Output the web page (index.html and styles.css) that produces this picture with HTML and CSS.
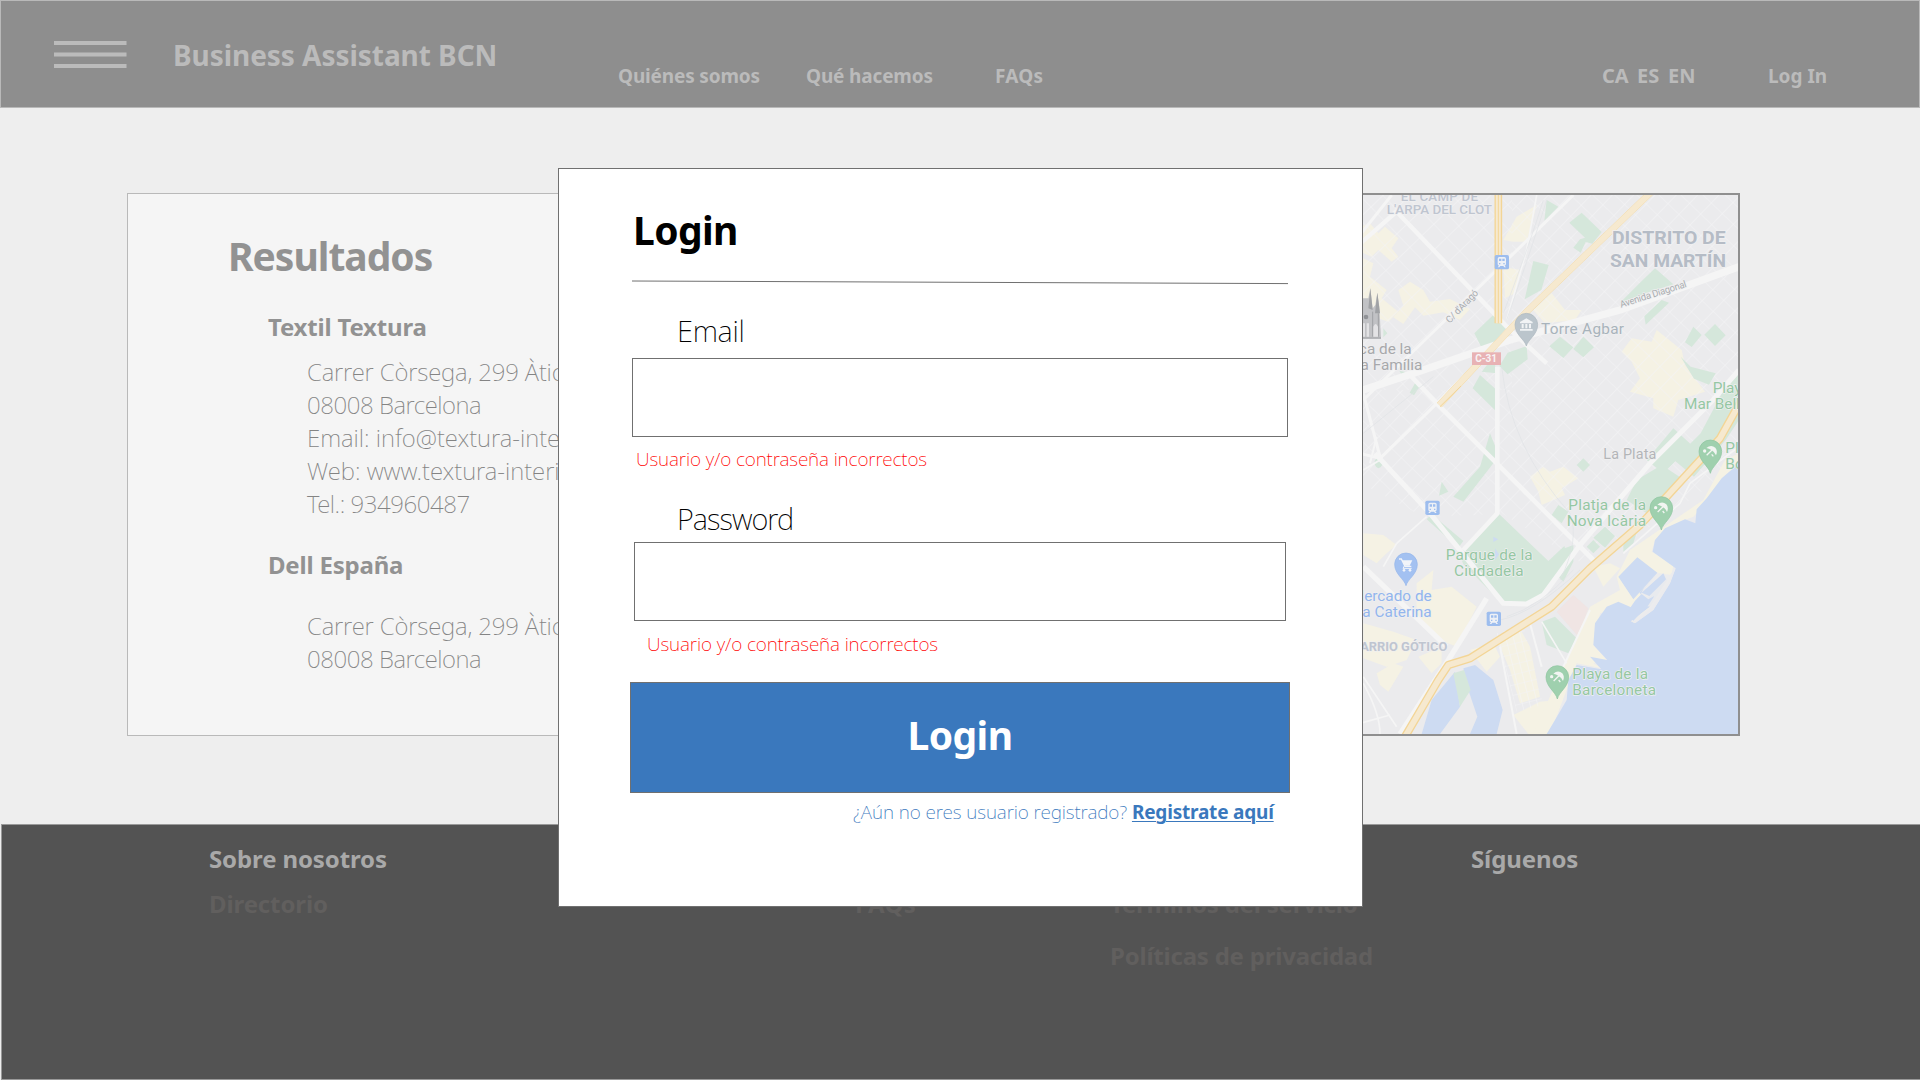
FILE: index.html
```html
<!DOCTYPE html>
<html lang="es">
<head>
<meta charset="utf-8">
<title>Business Assistant BCN</title>
<link rel="stylesheet" href="styles.css">
</head>
<body>
<div class="page">
  <header class="header">
    <svg class="burger" viewBox="0 0 73 27"><path d="M0 2h72.5M0 13.4h72.5M0 25h72.5"/></svg>
    <div class="brand">Business Assistant BCN</div>
    <a class="nav">Quiénes somos</a>
    <a class="nav">Qué hacemos</a>
    <a class="nav nav-faqs">FAQs</a>
    <a class="nav lang">CA</a>
    <a class="nav lang">ES</a>
    <a class="nav lang">EN</a>
    <a class="nav login-link">Log In</a>
  </header>

  <main class="main">
    <section class="results">
      <h1 class="results-title">Resultados</h1>
      <h2 class="company">Textil Textura</h2>
      <div class="address">
        <p class="sp-a">Carrer Còrsega, 299 Àtic</p>
        <p class="sp-b">08008 Barcelona</p>
        <p>Email: info@textura-interiors</p>
        <p>Web: www.textura-interiors</p>
        <p class="sp-b">Tel.: 934960487</p>
      </div>
      <h2 class="company second">Dell España</h2>
      <div class="address second">
        <p class="sp-a">Carrer Còrsega, 299 Àtic</p>
        <p class="sp-b">08008 Barcelona</p>
      </div>
    </section>

    <section class="map">
      <svg class="map-svg" viewBox="-54 45 1188 1617" preserveAspectRatio="none">
        <defs>
          <pattern id="blocks" width="46" height="46" patternUnits="userSpaceOnUse" patternTransform="translate(12 20) rotate(44)">
            <path d="M0 0H46M0 0V46" class="street"/>
          </pattern>
          <pattern id="blocksWide" width="56" height="50" patternUnits="userSpaceOnUse" patternTransform="translate(30 4) rotate(46)">
            <path d="M0 0H56M0 0V50" class="street"/>
          </pattern>
          <pattern id="lots" width="22" height="30" patternUnits="userSpaceOnUse" patternTransform="translate(420 1400) rotate(-14)">
            <path d="M0 0H22M0 0V30" class="street"/>
          </pattern>
          <g id="train">
            <rect width="43" height="43" rx="5" fill="#9dbdee"/>
            <path d="M14 6h15q5 0 5 5v16q0 4-4 5l4 5h-5l-3-4h-9l-3 4H9l4-5q-4-1-4-5V11q0-5 5-5z" fill="#eef1f6"/>
            <path d="M13 11h7v7h-7zM23 11h7v7h-7zM13 24h4v4h-4zM26 24h4v4h-4z" fill="#9dbdee"/>
          </g>
          <g id="beach">
            <path d="M0 66C-5 44-34 30-34 0A34 34 0 0 1 34 0C34 30 5 44 0 66z" fill="#9fd0ae" stroke="#8dc49e" stroke-width="2"/>
            <path d="M-12-10Q2-22 15-11Q23-1 17 12Q13 2 4-3Q-4-9-12-10z" fill="#f2f5f2"/>
            <path d="M5-4L-11 12M4 9l5 6" stroke="#f2f5f2" stroke-width="4" fill="none"/>
            <circle cx="-17" cy="-1" r="5" fill="#f2f5f2"/>
          </g>
        </defs>

        <rect x="-54" y="45" width="1188" height="1617" fill="#ebebed"/>

        <g class="built">
          <path d="M0 140l30-10 25 30 20-20 40 35-20 30 20 25-20 15-40-35-20 20-35-15z"/>
          <path d="M-10 225l50 25-10 40 50 40-15 25 50 40-30 30-60-20-40-10z"/>
          <path d="M115 330l35-25 40 25 20 35 60-8 60 30-30 32-50-22-60 10-25-25-35 50-30-20 30-35z"/>
          <path d="M430 180l40-70 60-35-30 110-40 0z"/>
          <path d="M430 260l50 10-15 70-30 15zM520 390l55-50 40 50 50 0-20 30-90 10z"/>
          <path d="M785 515l30-40 60 10 15-35 75 60 10 45 60 80-80 25-15 50-60-25 0-30-70-20 30-40-25-50z"/>
          <path d="M510 890l40-30 20 15 40-15 45 35-50 30 10 20-70 30-10-40z"/>
          <path d="M10 1060l60 5 40 30-30 25-30 30-40-25zM170 1210l50-40-5 60 60-10 75 60-60 120-50-20-70-60z"/>
          <path d="M10 1330l90 25 70 25-30 60-60 20-70-25zM50 1480l50-30 30 10-45 75-25-20zM175 1430l70-30 0 50-30 30z"/>
          <path d="M330 1410l70-20 20 40-40 45zM410 1385l75-30 25 45 30 150-60 20-30-100-30-70zM460 1605l80-40 55-5-30 102-60 0z"/>
          <path d="M700 1160l50-10 30 15-50 55z"/>
        </g>

        <rect x="-54" y="45" width="510" height="585" fill="url(#blocksWide)"/>
        <path d="M456 45H1134V860L690 1165 430 1003 190 1010-54 880V630H456z" fill="url(#blocks)"/>
        <path d="M410 1360l80-25 60 240-80 20z" fill="url(#lots)"/>

        <g class="park">
          <path d="M628 128l37-30 60 58-28 35-20-5-15 32-22-15 20-25 15-5z"/>
          <path d="M520 243l46 12-22 75-50 28zM560 60l35 20-42 42zM405 400l38 40-70 80-30-60z"/>
          <path d="M885 265l55 48-80 25-80 30 60-60zM905 360l22 8-70 66-4-25z"/>
          <path d="M1000 440l25 25-30 36-20-14zM1065 432l32 34-32 32-32-34zM600 470l40 32-30 32-42-35zM670 470l32 32-32 30-30-25zM962 530l30 30 75 20-20 34-45-18z"/>
          <path d="M500 498l3 40-60 45-25-25 25-40zM400 530l10 50-45-5zM360 585l50 45 0 65-72-70zM165 610l15 8-18 28-13-8zM118 572l18 4-10 10z"/>
          <path d="M390 760l20 50-10 40-90 115-30-15 80-90zM245 905l20 30-28 12z"/>
          <path d="M940 745l55 50-85 85-50-40zM1137 570v150l-40 60-95 110-60-50 80-80 90-170zM830 900l75-45 60 40-105 105-60-40z"/>
          <path d="M215 1003l95 80-15 20-95-85zM595 975l30 20-20 35-30-25zM735 1040l30 28-30 35-35-30zM700 1080l20 20-20 20-20-20zM640 1095l0 50-30 60-15-15 5-80zM790 1080l45-40-15 50-30 25z"/>
          <path d="M418 1003l147 140 48-45 14 42-82 105-45 26-70 2-120-120-12-30 35-30z"/>
          <path d="M545 1325l40-15 65 65-25 45-65-25z"/>
          <path d="M45 840q15-15 25 0 0 20-15 25-15-8-10-25zM670 835l20 20-20 20-20-20zM70 445l12 15-12 12z"/>
        </g>
        <path d="M590 1295l50-50 45 40-30 85z" fill="#f0e5e4"/>
        <path d="M400 1070l15 8-15 8zM405 1105l12 18-12 18z" fill="#cddbf2"/>

        <path class="sand" d="M1137 820L1137 870 1000 1010 960 1025 885 1080 875 1115 900 1130 940 1158 930 1200 870 1285 820 1330 770 1290 720 1300 705 1400 740 1440 700 1450 725 1465 650 1450 570 1662 520 1662 690 1280 780 1230 770 1190 810 1110 1030 960 1095 840z"/>
        <path class="water" d="M1137 850L1085 895 1040 955 1010 988 1006 1030 975 1018 915 1045 885 1080 878 1115 947 1165 930 1210 880 1290 825 1330 813 1324 870 1280 922 1200 905 1185 870 1222 878 1235 860 1258 838 1238 892 1178 832 1258 820 1285 775 1265 740 1280 705 1330 700 1395 742 1440 690 1430 724 1468 650 1455 625 1500 620 1560 585 1620 560 1662 1137 1662z"/>
        <path d="M820 1288l55-112 55 8 17-19-17 45-50 80-55 40-12-6 57-44-40-8z" fill="#ebebed" opacity=".9"/>
        <path class="water" d="M775 1190l57-58 60 46-72 80zM845 1238l65-58 8 18-50 50z"/>
        <path class="water" d="M825 1262l20-20 20 16 18-10-18 28-45 46-22-20z"/>
        <path class="water" d="M185 1662L215 1560 285 1475 300 1580 240 1662zM310 1465L345 1455 400 1500 428 1590 410 1662 330 1662 352 1610 325 1530z"/>
        <path class="park" d="M280 1480l32-10 20 60-32 50z"/>

        <g class="road">
          <path d="M-10 200L110 95 440 440 560 550" stroke-width="13"/>
          <path d="M95 45L-20 190M10 660L410 270 640 45M60 830L10 640M0 820L60 835 200 700 430 470" stroke-width="9"/>
          <path d="M-20 640L190 570 450 480 780 390 1137 260" stroke-width="22"/>
          <path d="M150 585L240 680 420 860 700 1140" stroke-width="14"/>
          <path d="M412 560V1000L310 1110" stroke-width="14"/>
          <path d="M45 820L210 1000 430 1270 500 1272 550 1245 660 1095 870 850 1050 670 1137 570" stroke-width="15"/>
          <path d="M380 1255L265 1440 120 1662M10 1160L260 1400" stroke-width="16"/>
          <path d="M50 770L30 850M10 870L60 840M690 1290L610 1460M420 1400L470 1662M510 1330L545 1460" stroke-width="6"/>
          <path d="M10 1490L110 1640M10 1510Q60 1600 60 1662M0 1630L90 1605M110 1090L70 1160M200 1010L110 1090M530 45L500 210 440 420M545 1325L620 1450M1137 800L990 910 960 970 790 1120" stroke-width="5"/>
        </g>
        <g fill="none" stroke="#e0e2e5" stroke-width="2">
          <path d="M560 60Q520 190 440 420M550 60Q510 190 430 400M425 560Q450 800 630 1000 660 1080 600 1200M10 760L220 590M420 1320Q520 1300 660 1170M440 1310Q540 1280 640 1170"/>
        </g>

        <g class="motorway-edge">
          <path d="M415 40V430" stroke-width="23"/>
          <path d="M880 30L500 395 238 675" stroke-width="19"/>
          <path d="M1150 650L1080 775 920 950 840 1035 690 1165 575 1280 330 1435 265 1455 235 1500 135 1670" stroke-width="25"/>
        </g>
        <g class="motorway">
          <path d="M415 40V430" stroke-width="15"/>
          <path d="M880 30L500 395 238 675" stroke-width="18"/>
          <path d="M1150 650L1080 775 920 950 840 1035 690 1165 575 1280 330 1435 265 1455 235 1500 135 1670" stroke-width="17"/>
        </g>
        <path d="M415 40V430M303 618L240 680" stroke="#f3d596" stroke-width="3" fill="none"/>

        <g>
          <path d="M-10 355H25L31 325 38 385 46 375 52 338 58 380 63 476H-10z" fill="#c1c2c5"/>
          <path d="M25 385L31 325 38 390zM45 400L52 338 60 400z" fill="#a0a2a5"/>
          <path d="M-10 474H63M38 395V470M55 400V470" stroke="#a0a2a5" stroke-width="3"/>
          <circle cx="18" cy="411" r="7" fill="#909296"/>
          <path d="M8 430h7v40H8zM20 430h7v40h-7zM40 470V440q7-16 14 0v30z" fill="#e3e3e5"/>
        </g>

        <g class="label">
          <g fill="#bfc5d0" font-weight="500" font-size="40">
            <text x="122" y="62" textLength="232">EL CAMP DE</text>
            <text x="80" y="102" textLength="316" lengthAdjust="spacingAndGlyphs">L'ARPA DEL CLOT</text>
            <text x="-24" y="1413" textLength="286" lengthAdjust="spacingAndGlyphs" font-weight="700">BARRIO GÓTICO</text>
          </g>
          <g fill="#b5bcc6" font-weight="700" font-size="55">
            <text x="756" y="192" textLength="341" lengthAdjust="spacingAndGlyphs">DISTRITO DE</text>
            <text x="750" y="262" textLength="348" lengthAdjust="spacingAndGlyphs">SAN MARTÍN</text>
          </g>
          <g fill="#a9acaf" font-size="29">
            <text transform="translate(783 383) rotate(-17.5)" textLength="208">Avenida Diagonal</text>
            <text transform="translate(269 431) rotate(-46)" textLength="126">C/ d'Aragó</text>
          </g>
          <g font-size="46">
            <text x="543" y="462" textLength="249" fill="#a8b3bb">Torre Agbar</text>
            <g fill="#a7a8ab" text-anchor="end">
              <text x="155" y="522">ica de la</text>
              <text x="187" y="570">da Família</text>
            </g>
            <text x="730" y="838" textLength="159" font-size="43" fill="#b3b5b8">La Plata</text>
            <g fill="#95c7a3">
              <text x="1058" y="640">Playa</text>
              <text x="972" y="687">Mar Bella</text>
              <text x="1096" y="820">Platja</text>
              <text x="1096" y="868">Bogatell</text>
              <text x="625" y="990" textLength="233">Platja de la</text>
              <text x="620" y="1038" textLength="238">Nova Icària</text>
              <text x="257" y="1140" textLength="261">Parque de la</text>
              <text x="282" y="1188" textLength="209">Ciudadela</text>
              <text x="637" y="1496" textLength="227">Playa de la</text>
              <text x="637" y="1545" textLength="251">Barceloneta</text>
            </g>
            <g fill="#92b5ed" text-anchor="end">
              <text x="215" y="1262">Mercado de</text>
              <text x="215" y="1310">ta Caterina</text>
            </g>
          </g>
        </g>
        <rect x="336" y="517" width="87" height="38" fill="#e8b2b4"/>
        <text x="346" y="545" textLength="65" class="shield">C-31</text>

        <use href="#train" x="404" y="225"/>
        <use href="#train" x="196" y="962"/>
        <use href="#train" x="380" y="1295"/>
        <use href="#beach" x="1051" y="814"/>
        <use href="#beach" x="904" y="984"/>
        <use href="#beach" x="592" y="1491"/>
        <g transform="translate(499 434)">
          <path d="M0 64C-5 44-34 30-34 0A34 34 0 0 1 34 0C34 30 5 44 0 64z" fill="#bbc5cc" stroke="#adb8bf" stroke-width="2"/>
          <path d="M-19-8L0-19 19-8V-4H-19zM-14-2h6v13h-6zM-3-2h6v13h-6zM8-2h6v13H8zM-19 13h38v5h-38z" fill="#f1f3f5"/>
        </g>
        <g transform="translate(138 1153)">
          <path d="M0 64C-5 44-34 30-34 0A34 34 0 0 1 34 0C34 30 5 44 0 64z" fill="#a3c1f1" stroke="#94b5ea" stroke-width="2"/>
          <path d="M-21-16h7l11 22h19" fill="none" stroke="#f1f4f9" stroke-width="4"/>
          <path d="M-12-12h31l-8 16h-15z" fill="#f1f4f9"/>
          <path d="M-5 5l-4 7h26" fill="none" stroke="#f1f4f9" stroke-width="3"/>
          <circle cx="-6" cy="18" r="4" fill="#f1f4f9"/><circle cx="12" cy="18" r="4" fill="#f1f4f9"/>
        </g>
      </svg>
    </section>
  </main>

  <footer class="footer">
    <div class="foot-col">
      <h3 class="foot-title">Sobre nosotros</h3>
      <a class="foot-link">Directorio</a>
    </div>
    <div class="foot-col untitled"><a class="foot-link faqs">FAQs</a></div>
    <div class="foot-col untitled">
      <a class="foot-link terms">Términos del servicio</a>
      <a class="foot-link terms">Políticas de privacidad</a>
    </div>
    <div class="foot-col"><h3 class="foot-title">Síguenos</h3></div>
  </footer>

  <form class="modal">
    <h2 class="modal-title">Login</h2>
    <svg class="rule" viewBox="0 0 656 4"><path d="M0 0L656 2.6"/></svg>
    <label class="label-text" for="email">Email</label>
    <input class="field" id="email" type="text">
    <p class="error">Usuario y/o contraseña incorrectos</p>
    <label class="label-text password-label" for="password">Password</label>
    <input class="field password-field" id="password" type="password">
    <p class="error password-error">Usuario y/o contraseña incorrectos</p>
    <button class="submit" type="button">Login</button>
    <p class="signup">¿Aún no eres usuario registrado? <a class="signup-link">Registrate aquí</a></p>
  </form>
</div>
</body>
</html>
```
FILE: styles.css
```css
* {
  box-sizing: border-box;
}

body {
  margin: 0;
  background: #eee;
  font-family: "Noto Sans", "Open Sans", sans-serif;
}

h1, h2, h3, p {
  margin: 0;
}

.page {
  position: relative;
  display: flex;
  flex-direction: column;
  width: 1920px;
  height: 1080px;
  overflow: hidden;
}

.header {
  display: grid;
  grid-template-columns: 119px 445px 188px 189px 607px 35px 31px 100px auto;
  align-items: start;
  height: 108px;
  padding-left: 53px;
  border: 1px solid #b9b9b9;
  background: #8e8e8e;
  color: #bbb;
  font-weight: 700;
  white-space: nowrap;
}

.burger {
  width: 73px;
  height: 27px;
  margin-top: 40px;
  fill: none;
  stroke: #bbb;
  stroke-width: 4;
}

.brand {
  margin-top: 34px;
  font-size: 28px;
  line-height: 40px;
  letter-spacing: -0.05px;
}

.nav {
  margin-top: 63px;
  font-size: 19px;
  line-height: 24px;
  letter-spacing: -0.15px;
}

.nav-faqs {
  letter-spacing: 0.2px;
}

.lang {
  font-size: 20px;
  letter-spacing: 0;
}

.login-link {
  letter-spacing: 0;
}

.main {
  display: flex;
  justify-content: space-between;
  align-items: flex-start;
  height: 716px;
  padding: 85px 180px 0 127px;
}

.results {
  width: 700px;
  height: 543px;
  padding: 37px 0 0 100px;
  border: 1px solid #b9b9b9;
  background: #f5f5f5;
  color: #929292;
}

.results-title {
  font-size: 39px;
  line-height: 50px;
  letter-spacing: -1px;
}

.company {
  margin: 29px 0 0 40px;
  font-size: 24px;
  line-height: 33px;
  letter-spacing: -0.2px;
}

.company.second {
  margin-top: 28px;
}

.address {
  margin: 12px 0 0 79px;
  font-size: 24px;
  font-weight: 200;
  line-height: 33px;
  color: #848484;
}

.address.second {
  margin-top: 28px;
}

.sp-a {
  letter-spacing: -0.15px;
}

.sp-b {
  letter-spacing: -0.45px;
}

.map {
  width: 400px;
  height: 543px;
  border: 2px solid #8f8f8f;
}

.map-svg {
  display: block;
  width: 396px;
  height: 539px;
  font-family: Roboto, sans-serif;
}

.street {
  fill: none;
  stroke: #f4f4f5;
  stroke-width: 3.5;
}

.built,
.sand {
  fill: #f5f2e4;
}

.park {
  fill: #d5e7db;
}

.water {
  fill: #cddbf2;
}

.road {
  fill: none;
  stroke: #f5f5f5;
  stroke-linejoin: round;
}

.motorway,
.motorway-edge {
  fill: none;
  stroke: #f6e9cf;
  stroke-linejoin: round;
}

.motorway-edge {
  stroke: #f3d596;
}

.label {
  paint-order: stroke;
  stroke: #f0f0f1;
  stroke-width: 4px;
  stroke-linejoin: round;
}

.shield {
  fill: #f8f4f4;
  font-size: 30px;
  font-weight: 700;
}

.footer {
  display: grid;
  grid-template-columns: 646px 255px 361px auto;
  height: 256px;
  margin-left: 1px;
  padding: 18px 0 0 207px;
  border: 1px solid #999;
  border-right: 0;
  background: #535353;
  font-size: 24px;
  line-height: 32px;
  font-weight: 700;
}

.foot-col {
  display: flex;
  flex-direction: column;
  gap: 13px;
  letter-spacing: -0.12px;
}

.foot-col.untitled {
  gap: 20px;
  padding-top: 45px;
}

.foot-title {
  color: #a9a9a9;
  font-size: 24px;
}

.foot-link {
  color: #615f5e;
}

.faqs {
  letter-spacing: 0.3px;
}

.terms {
  letter-spacing: -0.22px;
}

.modal {
  position: absolute;
  left: 558px;
  top: 168px;
  display: flex;
  flex-direction: column;
  align-items: flex-start;
  width: 805px;
  height: 739px;
  padding: 36px 0 0 73px;
  border: 1px solid #707070;
  background: #fff;
}

.modal-title {
  margin-left: 1px;
  font-size: 39px;
  line-height: 50px;
  letter-spacing: -0.6px;
}

.rule {
  width: 656px;
  height: 4px;
  margin-top: 26px;
  overflow: visible;
  fill: none;
  stroke: #707070;
}

.label-text {
  margin: 28px 0 0 45px;
  font-size: 29px;
  font-weight: 200;
  line-height: 36px;
  letter-spacing: -0.3px;
}

.password-label {
  margin-top: 30px;
  letter-spacing: -0.95px;
}

.field {
  width: 656px;
  height: 79px;
  margin-top: 9px;
  padding: 0 16px;
  border: 1px solid #707070;
  border-radius: 0;
  background: #fff;
  font: inherit;
}

.password-field {
  width: 652px;
  margin: 5px 0 0 2px;
}

.error {
  margin: 10px 0 0 4px;
  color: #f00;
  font-size: 19px;
  font-weight: 200;
  line-height: 24px;
  letter-spacing: -0.13px;
}

.password-error {
  margin: 11px 0 0 15px;
}

.submit {
  width: 660px;
  height: 111px;
  margin: 26px 0 0 -2px;
  padding: 0 0 6px;
  border: 1px solid #707070;
  background: #3a78bd;
  color: #fff;
  font: 700 39px/50px "Noto Sans", "Open Sans", sans-serif;
  letter-spacing: -0.6px;
}

.signup {
  margin: 7px 0 0 221px;
  color: #3a78bd;
  font-size: 19px;
  font-weight: 200;
  line-height: 24px;
  letter-spacing: -0.1px;
}

.signup-link {
  font-weight: 700;
  letter-spacing: -0.2px;
  text-decoration: underline;
  text-decoration-thickness: 1px;
  text-underline-offset: 2px;
}
```
